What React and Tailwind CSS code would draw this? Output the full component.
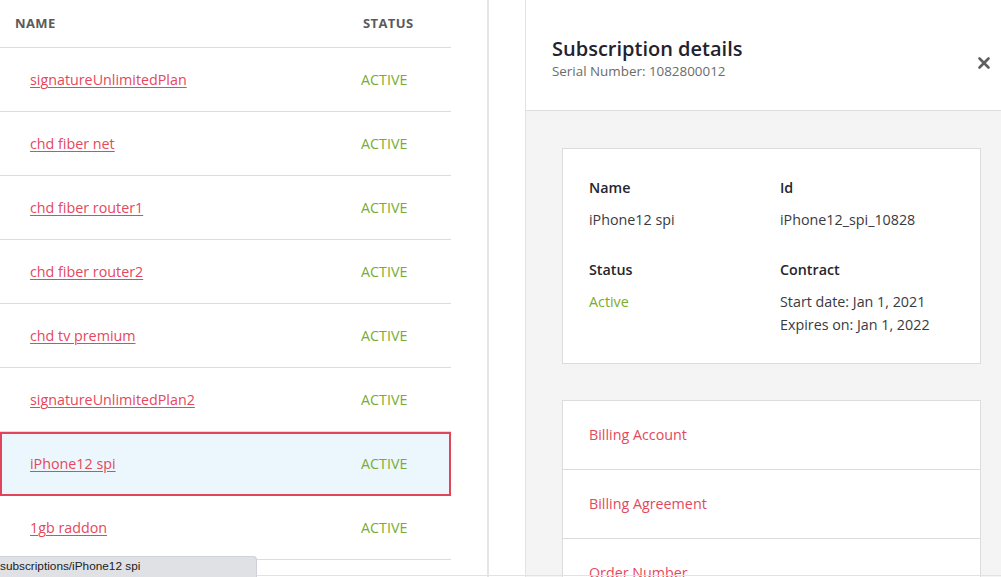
import { X } from 'lucide-react';

const subscriptions = [
  { name: 'signatureUnlimitedPlan', status: 'ACTIVE' },
  { name: 'chd fiber net', status: 'ACTIVE' },
  { name: 'chd fiber router1', status: 'ACTIVE' },
  { name: 'chd fiber router2', status: 'ACTIVE' },
  { name: 'chd tv premium', status: 'ACTIVE' },
  { name: 'signatureUnlimitedPlan2', status: 'ACTIVE' },
  { name: 'iPhone12 spi', status: 'ACTIVE', selected: true },
  { name: '1gb raddon', status: 'ACTIVE' },
];

const related = ['Billing Account', 'Billing Agreement', 'Order Number'];

const App = () => {
  return (
    <div className="relative flex h-[577px] w-[1001px] overflow-hidden bg-white font-['Open_Sans',sans-serif]">
      {/* subscriptions list */}
      <div className="w-[451px] shrink-0">
        <div className="flex h-[48px] items-center border-b border-[#dcdcdc] text-[13px] font-bold uppercase tracking-[0.4px] text-[#5a5a5a]">
          <span className="pl-[15px]">Name</span>
          <span className="ml-auto w-[88px]">Status</span>
        </div>
        {subscriptions.map((s) => (
          <div
            key={s.name}
            className={`flex h-[64px] items-center text-[14.3px] ${s.selected ? 'border-2 border-[#e0455c] bg-[#ebf7fc]' : 'border-b border-[#dcdcdc]'}`}
          >
            <a href="#" className={`${s.selected ? 'pl-[28px]' : 'pl-[30px]'} text-[#e5485d] underline decoration-1 underline-offset-2`}>
              {s.name}
            </a>
            <span className={`ml-auto text-[#7bab2f] ${s.selected ? 'w-[88px]' : 'w-[90px]'}`}>{s.status}</span>
          </div>
        ))}
      </div>

      {/* divider */}
      <div className="ml-[36px] w-[2px] shrink-0 bg-[#e6e6e6]" />

      {/* details panel */}
      <div className="ml-[36px] flex flex-1 flex-col border-l border-[#e3e3e3] bg-[#f4f4f4]">
        <div className="flex h-[111px] shrink-0 items-start border-b border-[#dedede] bg-white pl-[26px] pt-[35px]">
          <div>
            <h2 className="text-[20px] font-semibold leading-[27px] text-[#1f2230]">Subscription details</h2>
            <p className="text-[13.4px] leading-[18px] text-[#6b6b6b]">Serial Number: 1082800012</p>
          </div>
          <X className="ml-auto mr-[8px] mt-[19px] h-[18px] w-[18px] text-[#5f5f5f]" strokeWidth={3.5} />
        </div>

        <div className="pl-[36px] pr-[20px] pt-[37px]">
          <div className="grid grid-cols-[191px_1fr] border border-[#dcdcdc] bg-white px-[26px] pb-[27px] pt-[29px] text-[14.3px]">
            <div>
              <div className="font-semibold leading-[20px] text-[#25262e]">Name</div>
              <div className="mt-[12px] leading-[20px] text-[#3a3a42]">iPhone12 spi</div>
            </div>
            <div>
              <div className="font-semibold leading-[20px] text-[#25262e]">Id</div>
              <div className="mt-[12px] leading-[20px] text-[#3a3a42]">iPhone12_spi_10828</div>
            </div>
            <div className="mt-[30px]">
              <div className="font-semibold leading-[20px] text-[#25262e]">Status</div>
              <div className="mt-[12px] leading-[20px] text-[#7bab2f]">Active</div>
            </div>
            <div className="mt-[30px]">
              <div className="font-semibold leading-[20px] text-[#25262e]">Contract</div>
              <div className="mt-[10px] leading-[23px] text-[#3a3a42]">
                <div>Start date: Jan 1, 2021</div>
                <div>Expires on: Jan 1, 2022</div>
              </div>
            </div>
          </div>

          <div className="mt-[36px] border border-[#dcdcdc] bg-white">
            {related.map((r) => (
              <div key={r} className="flex h-[69px] items-center border-b border-[#dcdcdc] pl-[26px] text-[14.3px] text-[#e5485d]">
                {r}
              </div>
            ))}
          </div>
        </div>
      </div>

      {/* browser status bubble */}
      <div className="absolute bottom-0 left-0 flex h-[21px] w-[257px] items-center rounded-tr-[4px] border-t border-r border-[#cfd2d6] bg-[#dfe1e5] font-['Liberation_Sans',sans-serif] text-[11.8px] text-[#202124]">
        subscriptions/iPhone12 spi
      </div>
      <div className="absolute bottom-[1px] left-[257px] right-0 h-px bg-[#e2e2e2]" />
    </div>
  );
};

export default App;
